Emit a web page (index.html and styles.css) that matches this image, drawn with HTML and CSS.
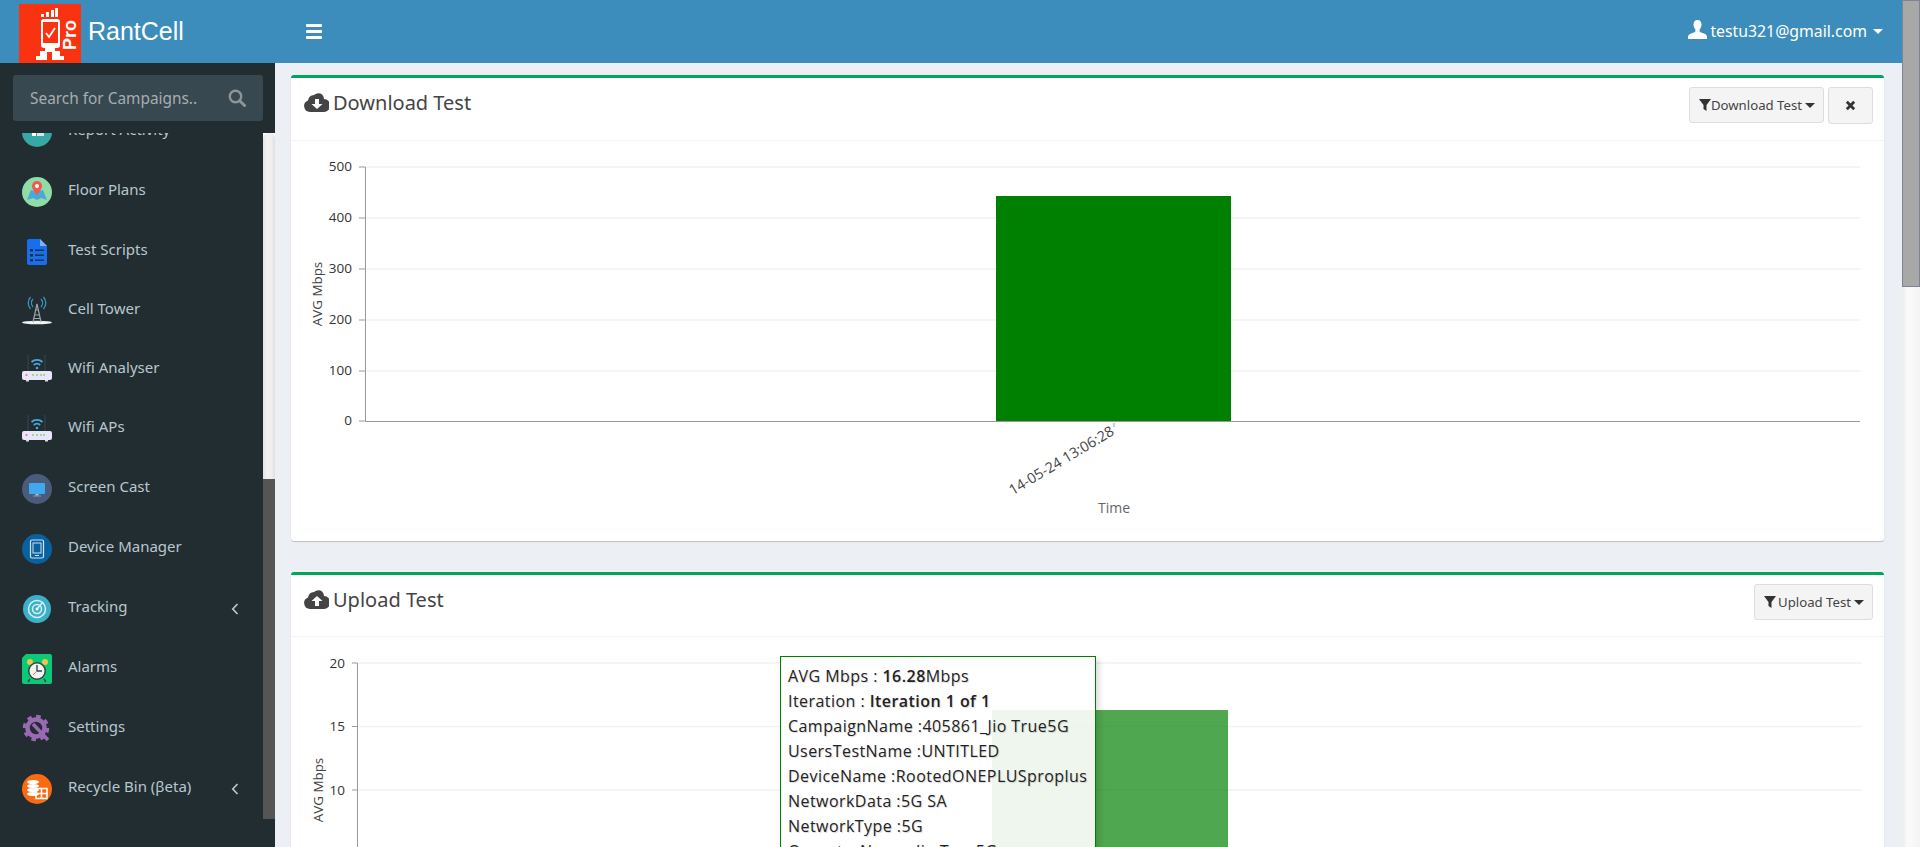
FILE: index.html
```html
<!DOCTYPE html>
<html lang="en">
<head>
<meta charset="utf-8">
<title>RantCell</title>
<link rel="stylesheet" href="styles.css">
</head>
<body>
<div class="app">
  <div class="page">
    <header class="topbar">
      <div class="brand">
        <div class="logo">
          <svg class="logo-art" viewBox="0 0 62 59" width="62" height="59">
            <g fill="#fff">
              <rect x="22" y="10" width="3" height="3"/><rect x="27" y="8" width="3" height="5"/><rect x="32" y="6" width="3" height="7"/><rect x="36" y="4" width="3" height="9"/>
              <path d="M25 15h13a3 3 0 0 1 3 3v23a3 3 0 0 1-3 3h-2v3h5v5h4v4H33v-8h-5v8H17v-4h4v-5h5v-3h-1a3 3 0 0 1-3-3V18a3 3 0 0 1 3-3z"/>
            </g>
            <rect x="24" y="18" width="15" height="21" fill="#f93210"/>
            <path d="M27 29l3 4 6-9" fill="none" stroke="#fff" stroke-width="1.800"/>
            <text x="0" y="0" class="logo-pro" transform="translate(57 46) rotate(-90)">Pro</text>
          </svg>
        </div>
        <span class="brand-name">RantCell</span>
      </div>
      <button class="burger" aria-label="Toggle"><span></span><span></span><span></span></button>
      <div class="user">
        <svg class="user-icon" viewBox="0 0 19 19" width="19" height="19"><path fill="#fff" d="M9.500 0c2.600 0 4 2 4 4.600 0 2-.8 3.900-1.900 5v1.400c0 1 1.600 1.500 3.500 2.300 2 .8 3.900 1.500 3.900 3.300V19H0v-2.400c0-1.800 1.900-2.500 3.900-3.300 1.900-.8 3.500-1.300 3.500-2.300V9.600C6.300 8.500 5.500 6.600 5.500 4.600 5.500 2 6.900 0 9.500 0z"/></svg>
        <span class="user-mail">testu321@gmail.com</span>
        <i class="caret caret-white"></i>
      </div>
    </header>
    <div class="body">
      <aside class="sidebar">
        <div class="search">
          <span class="search-text">Search for Campaigns..</span>
          <svg viewBox="0 0 18 18" width="18" height="18"><circle cx="7.500" cy="7.500" r="5.700" fill="none" stroke="#8f9496" stroke-width="2.400"/><path d="M11.700 11.700l4.800 4.800" stroke="#8f9496" stroke-width="3" stroke-linecap="round"/></svg>
        </div>
        <div class="side-body">
          <nav class="menu">
            <a class="item item-clipped">
              <svg class="ico" viewBox="0 0 30 30"><circle cx="15" cy="15" r="15" fill="#38a8a6"/><rect x="10" y="13" width="4" height="6" fill="#fff"/><rect x="15" y="14" width="7" height="5" fill="#cfeaea"/></svg>
              <span>Report Activity</span>
            </a>
            <a class="item">
              <svg class="ico" viewBox="0 0 30 30"><circle cx="15" cy="15" r="15" fill="#8fdca6"/><path d="M5 23l4-10 6 2 6-2 4 10-6-2-4 2-4-2z" fill="#4aa9dc"/><path d="M15 4a5 5 0 0 1 5 5c0 3.500-5 9-5 9s-5-5.500-5-9a5 5 0 0 1 5-5z" fill="#ee5a4c"/><circle cx="15" cy="9" r="2" fill="#fff"/></svg>
              <span>Floor Plans</span>
            </a>
            <a class="item">
              <svg class="ico" viewBox="0 0 30 30"><path d="M7 2h11l7 7v17a2 2 0 0 1-2 2H7a2 2 0 0 1-2-2V4a2 2 0 0 1 2-2z" fill="#1670ee"/><path d="M18 2l7 7h-7z" fill="#7fb0f6"/><g fill="#1c2c44"><rect x="8" y="12" width="3" height="2.500"/><rect x="8" y="17" width="3" height="2.500"/><rect x="8" y="22" width="3" height="2.500"/><rect x="13" y="12.500" width="9" height="1.400"/><rect x="13" y="17.500" width="9" height="1.400"/><rect x="13" y="22.500" width="9" height="1.400"/></g></svg>
              <span>Test Scripts</span>
            </a>
            <a class="item item-short">
              <svg class="ico" viewBox="0 0 30 30"><ellipse cx="15" cy="26.500" rx="15" ry="1.800" fill="#eef2f2"/><path d="M15 8l-4 18M15 8l4 18M12 19h6M11.500 22.500h7M13 14h4" stroke="#9aa5a8" stroke-width="1.200" fill="none"/><g fill="none" stroke="#3c93bf" stroke-width="1.300"><path d="M11 3a6 6 0 0 0 0 8M19 3a6 6 0 0 1 0 8"/><path d="M8.500 1a9 9 0 0 0 0 12M21.500 1a9 9 0 0 1 0 12"/></g></svg>
              <span>Cell Tower</span>
            </a>
            <a class="item item-shorter">
              <svg class="ico" viewBox="0 0 30 30"><path d="M6 1v16M23 1v16" stroke="#3a474d" stroke-width="1"/><g fill="none" stroke="#46a8e0" stroke-width="1.800"><path d="M9.500 8a8 8 0 0 1 11 0M11.800 11a4.500 4.500 0 0 1 6.400 0"/></g><circle cx="15" cy="14" r="1.300" fill="#46a8e0"/><rect x="0" y="17" width="30" height="9" rx="2" fill="#e9e6fb"/><rect x="4" y="26" width="3" height="1.500" fill="#dcdcdc"/><rect x="23" y="26" width="3" height="1.500" fill="#dcdcdc"/><circle cx="4.500" cy="21" r="1" fill="#f2764e"/><g fill="#a6d88c"><rect x="10" y="20" width="2" height="2"/><rect x="14" y="20" width="2" height="2"/><rect x="18" y="20" width="2" height="2"/><rect x="21" y="20" width="2" height="2"/></g></svg>
              <span>Wifi Analyser</span>
            </a>
            <a class="item">
              <svg class="ico" viewBox="0 0 30 30"><path d="M6 1v16M23 1v16" stroke="#3a474d" stroke-width="1"/><g fill="none" stroke="#46a8e0" stroke-width="1.800"><path d="M9.500 8a8 8 0 0 1 11 0M11.800 11a4.500 4.500 0 0 1 6.400 0"/></g><circle cx="15" cy="14" r="1.300" fill="#46a8e0"/><rect x="0" y="17" width="30" height="9" rx="2" fill="#e9e6fb"/><rect x="4" y="26" width="3" height="1.500" fill="#dcdcdc"/><rect x="23" y="26" width="3" height="1.500" fill="#dcdcdc"/><circle cx="4.500" cy="21" r="1" fill="#f2764e"/><g fill="#a6d88c"><rect x="10" y="20" width="2" height="2"/><rect x="14" y="20" width="2" height="2"/><rect x="18" y="20" width="2" height="2"/><rect x="21" y="20" width="2" height="2"/></g></svg>
              <span>Wifi APs</span>
            </a>
            <a class="item">
              <svg class="ico" viewBox="0 0 30 30"><circle cx="15" cy="15" r="15" fill="#4a5b7c"/><rect x="7" y="9" width="16" height="11" rx="1" fill="#3ea9ee"/><rect x="13.500" y="20" width="3" height="1.500" fill="#b9c4d4"/><rect x="11" y="21.500" width="8" height="1" fill="#8d9ab0"/></svg>
              <span>Screen Cast</span>
            </a>
            <a class="item">
              <svg class="ico" viewBox="0 0 30 30"><circle cx="15" cy="15" r="15" fill="#09619f"/><rect x="8.500" y="6" width="13" height="18" rx="1.500" fill="none" stroke="#cfe4f2" stroke-width="1.200"/><rect x="11" y="9" width="8" height="10" fill="none" stroke="#cfe4f2" stroke-width="1"/><rect x="13" y="21" width="4" height="1" fill="#cfe4f2"/></svg>
              <span>Device Manager</span>
            </a>
            <a class="item">
              <svg class="ico" viewBox="0 0 30 30"><circle cx="15" cy="15" r="14" fill="#3db0c9"/><g fill="none" stroke="#d9f1f6" stroke-width="1.500"><circle cx="15" cy="15" r="8.500"/><circle cx="15" cy="15" r="4.500"/></g><path d="M15 15l6-7" stroke="#d9f1f6" stroke-width="1.500"/><circle cx="15" cy="15" r="1.500" fill="#fff"/></svg>
              <span>Tracking</span>
              <svg class="angle" viewBox="0 0 8 12" width="8" height="12"><path d="M6.500 1L1.800 6l4.700 5" fill="none" stroke="#b8c7ce" stroke-width="1.700"/></svg>
            </a>
            <a class="item">
              <svg class="ico" viewBox="0 0 30 30"><path d="M4 0h24a2 2 0 0 1 2 2v26a2 2 0 0 1-2 2H2a2 2 0 0 1-2-2V4z" fill="#0cc977"/><circle cx="8" cy="8" r="3" fill="#ecc54c"/><circle cx="23" cy="8" r="3" fill="#ecc54c"/><circle cx="15" cy="17" r="9" fill="#37454a"/><circle cx="15" cy="17" r="7.500" fill="#f3f3ee"/><path d="M15 11v6h5" fill="none" stroke="#37454a" stroke-width="1.400"/><path d="M15 17l-4 4" stroke="#e5795f" stroke-width="1"/><path d="M8 25l-2 3M22 25l2 3" stroke="#37454a" stroke-width="1.500"/></svg>
              <span>Alarms</span>
            </a>
            <a class="item">
              <svg class="ico" viewBox="0 0 30 30"><circle cx="14" cy="14" r="8.500" fill="none" stroke="#9a69b4" stroke-width="4.500"/><circle cx="14" cy="14" r="11.500" fill="none" stroke="#9a69b4" stroke-width="3.500" stroke-dasharray="4.500 4.500"/><path d="M11 10l15 16" stroke="#9a69b4" stroke-width="3.500"/></svg>
              <span>Settings</span>
            </a>
            <a class="item">
              <svg class="ico" viewBox="0 0 30 30"><circle cx="15" cy="15" r="15" fill="#fa6a0e"/><g fill="#fff"><ellipse cx="11" cy="8" rx="6" ry="2"/><ellipse cx="11" cy="12" rx="6" ry="2"/><ellipse cx="11" cy="16" rx="6" ry="2"/><ellipse cx="11" cy="20" rx="6" ry="2"/></g><g fill="none" stroke="#fff" stroke-width="1.600"><path d="M14 14.500h11v10H14zM14 19.500h11M19.500 14.500v10"/></g></svg>
              <span>Recycle Bin (βeta)</span>
              <svg class="angle" viewBox="0 0 8 12" width="8" height="12"><path d="M6.500 1L1.800 6l4.700 5" fill="none" stroke="#b8c7ce" stroke-width="1.700"/></svg>
            </a>
          </nav>
          <div class="side-scroll"><div class="side-rail"></div><div class="side-thumb"></div></div>
        </div>
      </aside>
      <main class="content">
        <section class="card card-download">
          <div class="card-head">
            <h3 class="card-title">
              <svg viewBox="0 0 25 20" width="25" height="20"><path fill="#444" d="M6 20a6 6 0 0 1-2-11.600A6.500 6.500 0 0 1 10 3a7 7 0 0 1 6.500-1.500A6.500 6.500 0 0 1 20 7a6.500 6.500 0 0 1-.5 13z"/><path fill="#fff" d="M11 7h4v5h3.500L13 17l-5.500-5H11z"/></svg>
              Download Test
            </h3>
            <div class="card-tools">
              <button class="btn">
                <svg class="funnel" viewBox="0 0 12 12" width="12" height="12"><path fill="#333" d="M0 0h12L7.500 6v6L4.500 10V6z"/></svg>Download Test<i class="caret"></i>
              </button>
              <button class="btn btn-close" aria-label="Close">
                <svg viewBox="0 0 12 12" width="11" height="11"><path d="M2 2l8 8M10 2l-8 8" stroke="#333" stroke-width="3"/></svg>
              </button>
            </div>
          </div>
          <svg class="chart chart-download" viewBox="291 141 1593 400">
            <g class="grid">
              <path d="M366 167H1860M366 218H1860M366 269H1860M366 320H1860M366 371H1860"/>
            </g>
            <path class="axis" d="M359 167H365.500V421.500H1860M359 218h6M359 269h6M359 320h6M359 371h6M359 421h6M1114 423v4"/>
            <rect x="996" y="196" width="235" height="225" fill="#008000"/>
            <g class="tick-labels">
              <text x="352" y="171">500</text><text x="352" y="222">400</text><text x="352" y="273">300</text><text x="352" y="324">200</text><text x="352" y="375">100</text><text x="352" y="425">0</text>
            </g>
            <text class="axis-y" transform="translate(322 294) rotate(-90)">AVG Mbps</text>
            <text class="x-label" transform="translate(1115 434) rotate(-31)">14-05-24 13:06:28</text>
            <text class="axis-x" x="1114" y="513">Time</text>
          </svg>
        </section>
        <section class="card card-upload">
          <div class="card-head">
            <h3 class="card-title">
              <svg viewBox="0 0 25 20" width="25" height="20"><path fill="#444" d="M6 20a6 6 0 0 1-2-11.600A6.500 6.500 0 0 1 10 3a7 7 0 0 1 6.500-1.500A6.500 6.500 0 0 1 20 7a6.500 6.500 0 0 1-.5 13z"/><path fill="#fff" d="M11 17h4v-5h3.500L13 7l-5.500 5H11z"/></svg>
              Upload Test
            </h3>
            <div class="card-tools">
              <button class="btn">
                <svg class="funnel funnel-gap" viewBox="0 0 12 12" width="12" height="12"><path fill="#333" d="M0 0h12L7.500 6v6L4.500 10V6z"/></svg>Upload Test<i class="caret"></i>
              </button>
            </div>
          </div>
          <div class="chart-wrap">
            <svg class="chart chart-upload" viewBox="291 637 1593 300">
              <g class="grid"><path d="M358 663H1862M358 726.500H1862M358 790H1862"/></g>
              <path class="axis" d="M352 663H357.500V937M352 726.500h6M352 790h6"/>
              <rect x="992" y="710" width="236" height="227" fill="#008000" fill-opacity=".69"/>
              <g class="tick-labels">
                <text x="345" y="667.500">20</text><text x="345" y="731">15</text><text x="345" y="794.500">10</text>
              </g>
              <text class="axis-y" transform="translate(323 790) rotate(-90)">AVG Mbps</text>
            </svg>
            <div class="tooltip">
              <div>AVG Mbps : <b>16.28</b>Mbps</div>
              <div>Iteration : <b>Iteration 1 of 1</b></div>
              <div>CampaignName :405861_Jio True5G</div>
              <div>UsersTestName :UNTITLED</div>
              <div>DeviceName :RootedONEPLUSproplus</div>
              <div>NetworkData :5G SA</div>
              <div>NetworkType :5G</div>
              <div>OperatorName :Jio True5G</div>
            </div>
          </div>
        </section>
      </main>
    </div>
  </div>
  <div class="page-scroll"><div class="page-thumb"></div></div>
</div>
</body>
</html>
```
FILE: styles.css
```css
* { box-sizing: border-box; }
html, body { margin: 0; height: 100%; overflow: hidden; }
body { font-family: "Noto Sans", "Open Sans", sans-serif; font-size: 14px; color: #333; background: #ecf0f5; }
.app { display: flex; height: 847px; overflow: hidden; }
.page { flex: 1; min-width: 0; display: flex; flex-direction: column; }

/* top bar */
.topbar { height: 63px; flex: none; background: #3c8dbc; display: flex; align-items: center; }
.brand { width: 275px; display: flex; align-items: flex-end; height: 63px; padding-left: 19px; }
.logo { width: 62px; height: 59px; background: #f93210; }
.logo-art { display: block; }
.logo-pro { font-family: "Liberation Sans", sans-serif; font-weight: 700; font-size: 18px; fill: #fff; }
.brand-name { font-family: "Liberation Sans", sans-serif; font-size: 25px; color: #fff; margin-left: 7px; align-self: center; }
.burger { margin-left: 31px; width: 16px; padding: 0; border: 0; background: none; display: flex; flex-direction: column; gap: 3px; }
.burger span { display: block; height: 3px; border-radius: 1px; background: #fff; }
.user { margin-left: auto; margin-right: 19px; margin-bottom: 2px; display: flex; align-items: center; color: #fff; }
.user-mail { font-size: 15.800px; margin-left: 3px; }
.user-icon { margin-top: -3px; }
.caret { display: inline-block; width: 0; height: 0; border-left: 5px solid transparent; border-right: 5px solid transparent; border-top: 5px solid #333; margin-left: 3px; }
.caret-white { border-top-color: #fff; margin-left: 6px; margin-top: 2px; }

/* sidebar */
.body { flex: 1; min-height: 0; display: flex; }
.sidebar { width: 275px; flex: none; background: #222d32; display: flex; flex-direction: column; }
.search { height: 46px; margin: 12px 12px 12px 13px; flex: none; background: #374850; border-radius: 3px; display: flex; align-items: center; justify-content: space-between; padding: 0 17px; }
.search-text { color: #a9adae; font-size: 15.400px; }
.side-body { flex: 1; min-height: 0; display: flex; }
.menu { width: 263px; display: flex; flex-direction: column; overflow: hidden; }
.item { flex: none; height: 60px; display: flex; align-items: center; padding: 0 22px; color: #b8c7ce; font-size: 15px; }
.item span { margin-bottom: 2px; }
.item-clipped { margin-top: -33px; }
.item-short { height: 58px; }
.item-shorter { height: 59px; }
.ico { width: 30px; height: 30px; flex: none; margin-right: 16px; margin-top: 3px; }
.angle { margin-left: auto; margin-right: 2px; margin-top: 3px; }
.side-scroll { width: 12px; height: 686px; background: #fff; }
.side-rail { height: 346px; border-radius: 6px 6px 0 0; background: linear-gradient(90deg, #e4e4e4, #f2f2f2 35%, #efefef 70%, #dedede); }
.side-thumb { height: 340px; background: #555; }

/* content */
.content { flex: 1; min-width: 0; padding: 12px 18px 0 16px; overflow: hidden; }
.card { background: #fff; border-top: 3px solid #00a65a; border-radius: 3px; box-shadow: 0 1px 1px rgba(0,0,0,.2); }
.card-download { height: 466px; margin-bottom: 31px; }
.card-head { height: 62px; display: flex; justify-content: space-between; border-bottom: 1px solid #f4f4f4; padding: 9px 11px 0 13px; }
.card-download .card-head { height: 63px; }
.card-title { margin: 0; display: flex; gap: 4px; font-size: 20px; font-weight: 400; color: #444; height: 30px; align-items: center; }
.card-tools { display: flex; gap: 4px; align-items: flex-start; }
.btn { height: 36px; display: flex; align-items: center; background: #f4f4f4; border: 1px solid #ddd; border-radius: 3px; padding: 0 8px 0 9px; font: 13.200px "Noto Sans", sans-serif; color: #444; }
.btn-close { width: 45px; height: 37px; justify-content: center; padding: 0; }
.funnel-gap { margin-right: 2px; }
.chart { display: block; width: 1593px; }
.chart-download { height: 400px; }
.chart-upload { height: 300px; }
.chart-wrap { position: relative; }
.grid path { stroke: #f2f2f2; stroke-width: 1.500; fill: none; }
.axis { stroke: #999; stroke-width: 1; fill: none; }
.chart text { font-family: "Open Sans", sans-serif; }
.tick-labels text { font-size: 13.500px; text-anchor: end; fill: #333; }
.axis-y { font-size: 13.400px; text-anchor: middle; fill: #444; }
.x-label { font-size: 14.400px; text-anchor: end; fill: #444; }
.axis-x { font-size: 14px; text-anchor: middle; fill: #666; }
.tooltip { position: absolute; left: 489px; top: 19px; width: 316px; height: 240px; padding: 7px 7px; background: rgba(255,255,255,.9); border: 1px solid #008000; box-shadow: 3px 3px 6px rgba(0,0,0,.15); font-family: "Open Sans", sans-serif; font-size: 16px; line-height: 25px; color: #222; letter-spacing: .45px; white-space: nowrap; text-shadow: 1px 1px 1px rgba(0,0,0,.15); }
.tooltip b { font-weight: 600; }

/* page scrollbar */
.page-scroll { width: 18px; flex: none; background: linear-gradient(90deg, #ececec, #fafafa 30%, #f4f4f4); }
.page-thumb { height: 287px; background: #a8a8a8; border: 1px solid #7b8494; }
```
